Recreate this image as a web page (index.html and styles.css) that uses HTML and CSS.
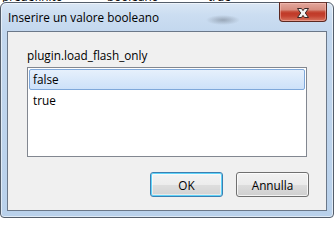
FILE: index.html
```html
<!DOCTYPE html>
<html lang="it">
<head>
<meta charset="utf-8">
<title>Inserire un valore booleano</title>
<link rel="stylesheet" href="styles.css">
</head>
<body>
<div class="backdrop">
  <span class="bg-cell c1">predefinito</span>
  <span class="bg-cell c2">booleano</span>
  <span class="bg-cell c3">true</span>
</div>
<div class="window">
  <div class="titlebar">
    <span class="title">Inserire un valore booleano</span>
    <button class="close" aria-label="Chiudi">
      <svg width="48" height="20" viewBox="0 0 48 20">
        <polygon points="18.5,6.5 22.5,6.5 24,8.6 25.5,6.5 29.5,6.5 26.3,11 29.5,15.5 25.5,15.5 24,13.4 22.5,15.5 18.5,15.5 21.7,11" fill="#f3f3f3" stroke="#3b2724" stroke-width="1" stroke-linejoin="miter"/>
      </svg>
    </button>
  </div>
  <div class="client">
    <div class="label">plugin.load_flash_only</div>
    <ul class="listbox">
      <li class="item selected">false</li>
      <li class="item">true</li>
    </ul>
    <div class="buttons">
      <button class="btn default">OK</button>
      <button class="btn">Annulla</button>
    </div>
  </div>
</div>
</body>
</html>
```
FILE: styles.css
```css
* { box-sizing: border-box; }
html, body { margin: 0; padding: 0; }
body {
  width: 335px;
  height: 220px;
  overflow: hidden;
  background: #ffffff;
  font-family: "Open Sans", "Liberation Sans", sans-serif;
  font-size: 11.75px;
  color: #000;
}
.backdrop {
  height: 2px;
  overflow: hidden;
  display: flex;
  align-items: flex-start;
}
.bg-cell {
  display: block;
  line-height: 12px;
  margin-top: -10px;
  white-space: nowrap;
}
.c1 { margin-left: 2px; width: 105px; }
.c2 { width: 101px; }
.window {
  width: 334px;
  height: 216px;
  border: 1px solid #545e6b;
  border-radius: 6px 6px 4px 4px;
  background: linear-gradient(#dae7f5 0px, #cbddf1 12px, #c2d7ee 30px, #b9d1eb 100%);
  box-shadow: inset 0 0 0 1px rgba(255, 255, 255, 0.55);
  display: flex;
  flex-direction: column;
}
.titlebar {
  height: 28px;
  display: flex;
  align-items: flex-start;
  padding: 0 6px;
  background: radial-gradient(ellipse 17px 5px at 222px 17px, rgba(105, 115, 128, 0.5), rgba(105, 115, 128, 0) 100%);
}
.title {
  line-height: 28px;
  margin-left: 1px;
  white-space: nowrap;
}
.close {
  margin-left: auto;
  margin-top: -1px;
  width: 48px;
  height: 20px;
  padding: 0;
  border: 1px solid #5c2820;
  border-top-color: #6e3a33;
  border-radius: 0 0 4px 4px;
  background: linear-gradient(#e3a79c 0%, #d78d7f 38%, #c95845 46%, #c03a28 56%, #c4412f 72%, #d77560 100%);
  box-shadow: inset 0 0 0 1px rgba(255, 205, 195, 0.45);
  display: flex;
  align-items: center;
  justify-content: center;
}
.close svg { display: block; margin: -1px; }
.client {
  flex: 1;
  margin: 0 6px 6px;
  border: 1px solid #6b7889;
  background: #f0f0f0;
  padding: 15px 17px 0 19px;
}
.label {
  line-height: 16px;
  white-space: nowrap;
}
.listbox {
  list-style: none;
  margin: 4px 0 0 0;
  padding: 1px;
  width: 280px;
  height: 90px;
  border: 1px solid #828790;
  background: #fff;
}
.item {
  height: 21px;
  line-height: 19px;
  border: 1px solid transparent;
  border-radius: 2px;
  padding-left: 3px;
}
.item.selected {
  border-color: #7fa8da;
  background: linear-gradient(#e6f0fc, #cde1f9);
}
.buttons {
  display: flex;
  justify-content: flex-end;
  gap: 13px;
  margin-top: 15px;
}
.btn {
  width: 73px;
  height: 25px;
  padding: 0;
  font: inherit;
  color: #000;
  border: 1px solid #707070;
  border-radius: 3px;
  background: linear-gradient(#f2f2f2 0%, #ebebeb 50%, #dddddd 51%, #cfcfcf 100%);
  box-shadow: inset 0 0 0 1px rgba(255, 255, 255, 0.75);
}
.btn.default {
  border-color: #3c7fb1;
  background: linear-gradient(#f3f3f3 0%, #ececec 50%, #dedede 51%, #d2d2d2 100%);
  box-shadow: inset 0 0 0 1px #5fd3f9, inset 0 0 0 2px rgba(255, 255, 255, 0.5);
}
```
